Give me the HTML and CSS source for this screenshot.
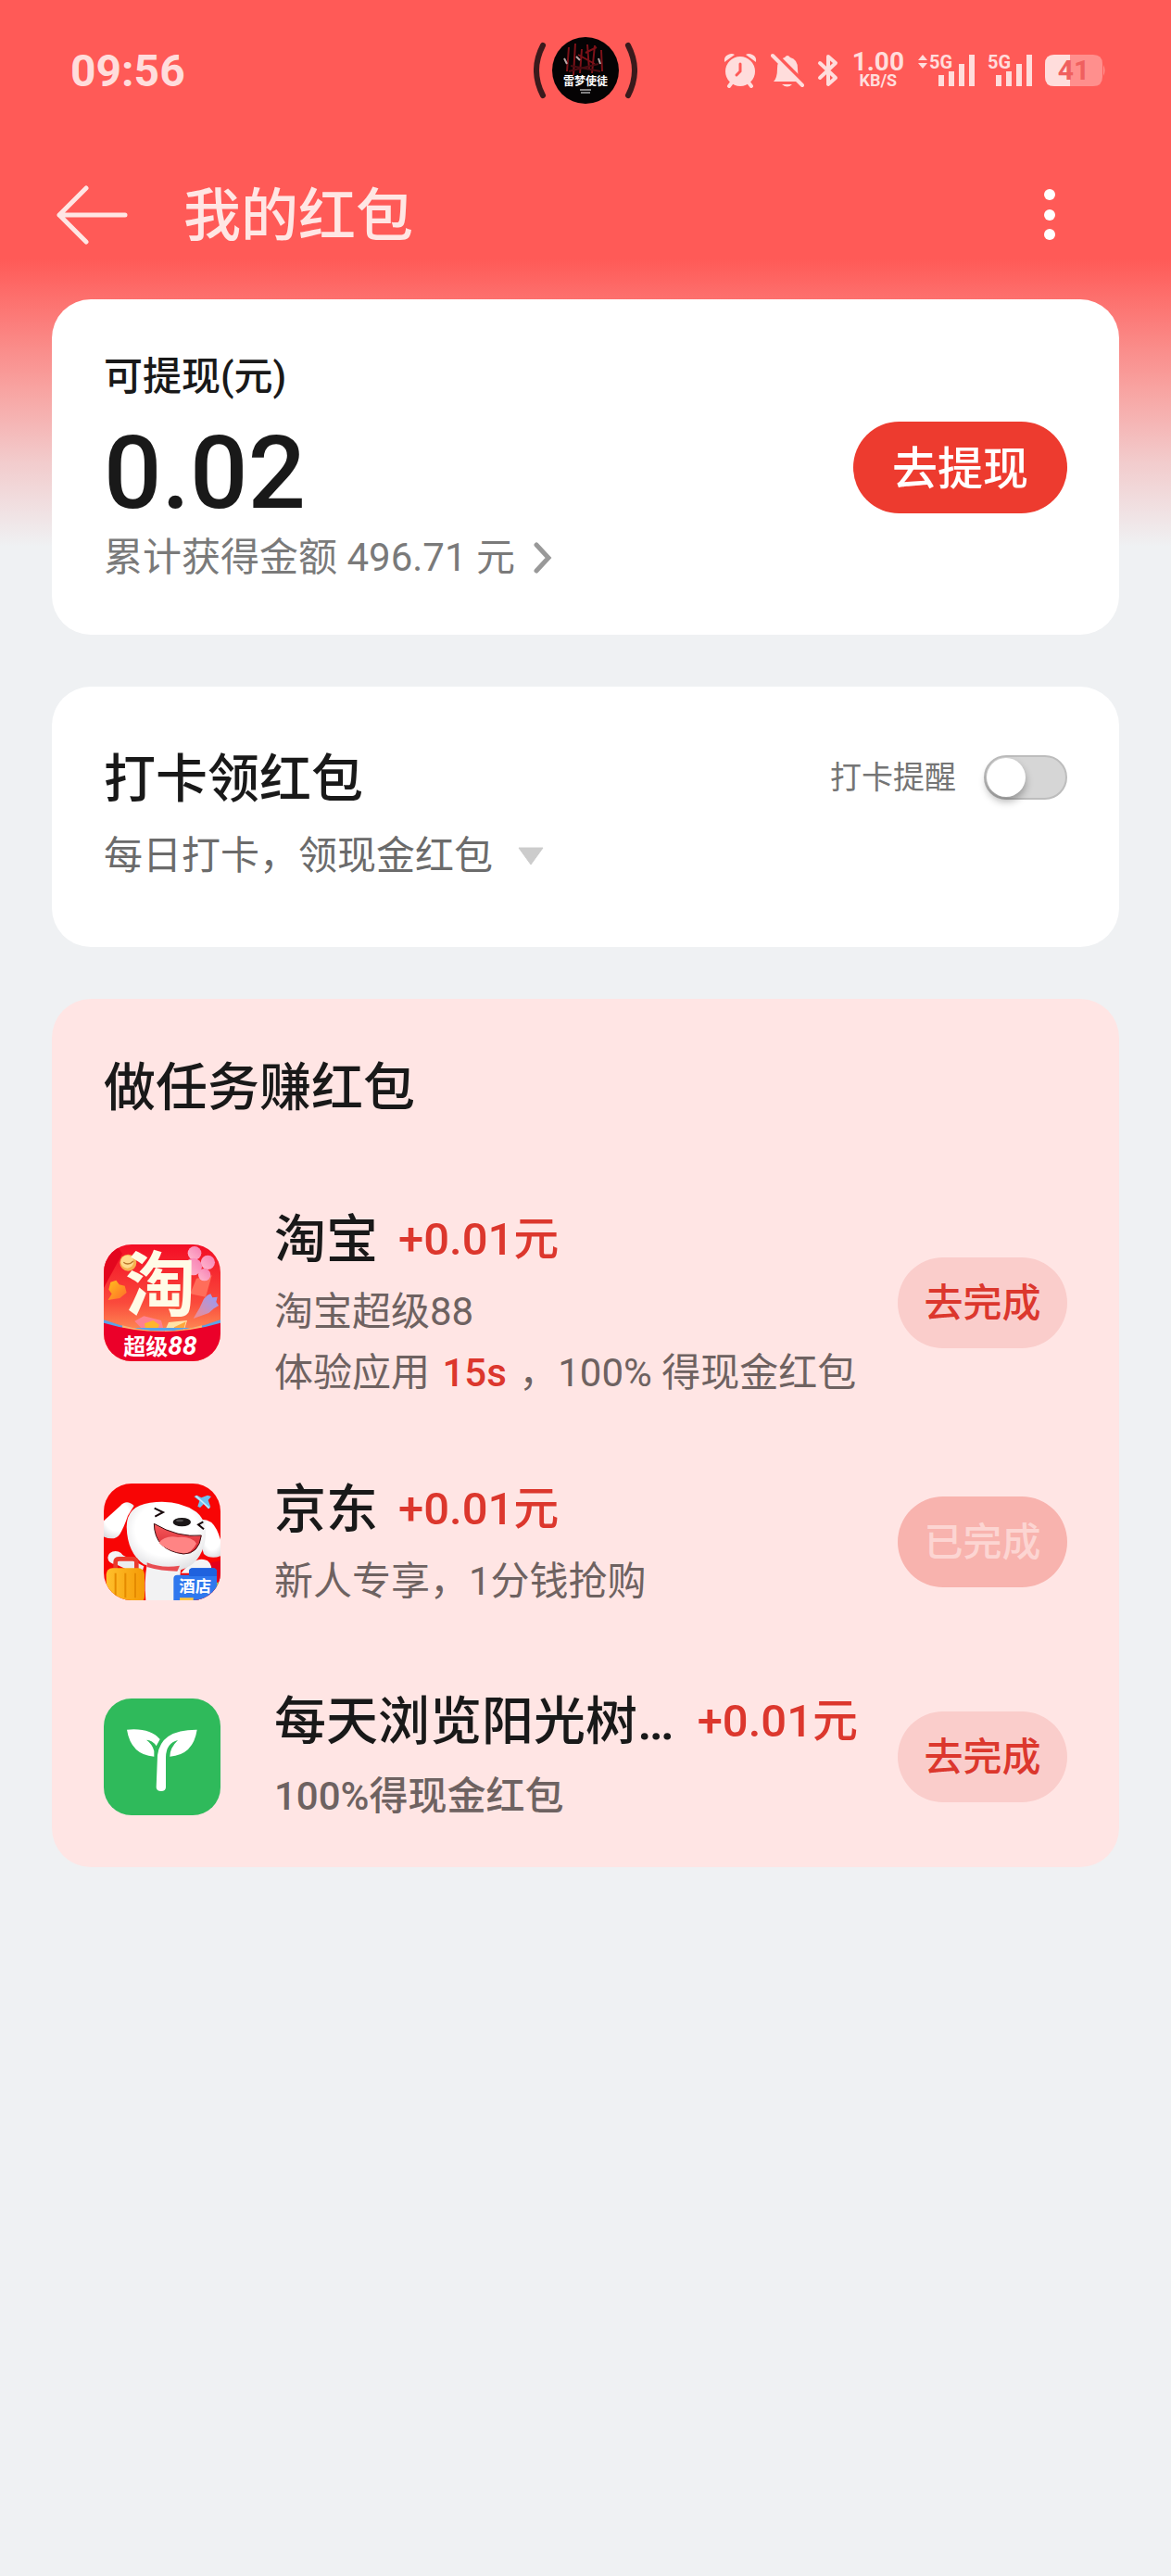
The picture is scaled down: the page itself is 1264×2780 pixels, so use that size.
FILE: index.html
```html
<!DOCTYPE html>
<html lang="zh-CN">
<head>
    <meta charset="UTF-8">
    <meta name="viewport" content="width=device-width, initial-scale=1.0">
    <title>我的红包</title>
    <link rel="stylesheet" href="styles.css">
</head>
<body>

<div class="status-bar">
    <span class="status-time">09:56</span>

    <svg class="status-island" width="112" height="74" viewBox="0 0 112 74">
        <path d="M10 10 Q-4 37 10 64 M102 10 Q116 37 102 64" fill="none" stroke="#3a1a1c" stroke-width="6" stroke-linecap="round"/>
        <circle cx="56" cy="37" r="36" fill="#050304"/>
        <path d="M38 12 L36 38 M45 8 L43 42 M52 14 L50 40 M58 9 L60 36 M66 10 L63 40 M73 15 L74 38 M48 20 L66 30 M56 18 L68 12" stroke="#7d1118" stroke-width="2" fill="none"/>
        <path d="M33 24 L36 30 M46 22 L50 26 M70 24 L72 30" stroke="#b9a7a8" stroke-width="2"/>
        <path d="M40 32 L72 38 M38 38 L70 30" stroke="#4a0c12" stroke-width="2"/>
        <text class="cover-title" x="56" y="53" text-anchor="middle">雷梦使徒</text>
        <path d="M50 58 H62 M51 61 H61" stroke="#fff" stroke-width="1"/>
    </svg>

    <div class="status-icons">
        <svg width="38" height="38" viewBox="0 0 38 38">
            <path d="M2 10 Q1 4 6 2 Q10 0 13 2 Z M36 10 Q37 4 32 2 Q28 0 25 2 Z" class="tint"/>
            <circle cx="19" cy="20" r="16" class="tint"/>
            <path d="M10 32 L7 36 M28 32 L31 36" class="tint-line"/>
            <path d="M19 12 V20 L15 24" fill="none" stroke="#ff5a57" stroke-width="3" stroke-linecap="round"/>
        </svg>
        <svg width="36" height="38" viewBox="0 0 36 38">
            <path d="M3 31 Q7 27 7 17 Q7 7 15 5 Q18 1 21 5 Q29 7 29 17 Q29 27 33 31 Z" class="tint"/>
            <path d="M12 34 H23 Q18 39 12 34 Z" class="tint"/>
            <path d="M4 0 L36 32" stroke="#ff5a57" stroke-width="4"/>
            <path d="M2 3 L34 35" class="tint-line"/>
        </svg>
        <svg width="24" height="38" viewBox="0 0 24 38">
            <path d="M3 11 L20 27 L12 34 V4 L20 11 L3 27" fill="none" class="tint-stroke"/>
        </svg>
        <div class="net-speed"><span class="speed-value">1.00</span><span class="speed-unit">KB/S</span></div>
        <svg width="62" height="50" viewBox="0 -6 62 50">
            <path d="M1 8 L6 2 L11 8 Z M1 11 L6 17 L11 11 Z" class="tint"/>
            <text class="net-type" x="13" y="17">5G</text>
            <path d="M26 24 V36 M37 20 V36 M48 12 V36 M59 2 V36" class="bars"/>
        </svg>
        <svg width="48" height="50" viewBox="0 -6 48 50">
            <text class="net-type" x="0" y="17">5G</text>
            <path d="M12 24 V36 M23 20 V36 M34 12 V36 M45 2 V36" class="bars"/>
        </svg>
        <svg width="66" height="38" viewBox="0 0 66 38">
            <path d="M10 2 H52 Q62 2 62 12 V26 Q62 36 52 36 H10 Q0 36 0 26 V12 Q0 2 10 2 Z" fill="#ff8f8d"/>
            <path d="M10 2 H27 V36 H10 Q0 36 0 26 V12 Q0 2 10 2 Z" class="tint"/>
            <path d="M63 13 Q66 19 63 25 Z" fill="#ff8f8d"/>
            <text class="battery-level" x="31" y="29" text-anchor="middle">41</text>
        </svg>
    </div>
</div>

<header class="top-bar">
    <button class="icon-button" type="button" aria-label="返回">
        <svg width="78" height="64" viewBox="0 0 78 64">
            <path d="M33 3 L4 32 L33 61 M4 32 H75" fill="none" stroke="#ffe6e4" stroke-width="5" stroke-linecap="round" stroke-linejoin="round"/>
        </svg>
    </button>
    <h1>我的红包</h1>
    <button class="icon-button" type="button" aria-label="更多">
        <svg width="40" height="60" viewBox="0 0 40 60">
            <circle cx="20" cy="8" r="6" fill="#fff"/>
            <circle cx="20" cy="30" r="6" fill="#fff"/>
            <circle cx="20" cy="51" r="6" fill="#fff"/>
        </svg>
    </button>
</header>

<main>
    <section class="card balance">
        <div class="balance-info">
            <div class="balance-label">可提现(元)</div>
            <div class="balance-amount">0.02</div>
            <a class="balance-total" href="#">累计获得金额 496.71 元
                <svg width="20" height="34" viewBox="0 0 20 34">
                    <path d="M3 3 L16 17 L3 31" fill="none" stroke="#999" stroke-width="5" stroke-linecap="round"/>
                </svg>
            </a>
        </div>
        <button class="withdraw" type="button">去提现</button>
    </section>

    <section class="card checkin">
        <div class="checkin-head">
            <h2>打卡领红包</h2>
            <label class="reminder" for="reminder">打卡提醒
                <input class="switch" type="checkbox" id="reminder">
            </label>
        </div>
        <div class="checkin-desc">每日打卡，领现金红包
            <svg width="30" height="20" viewBox="0 0 30 20">
                <path d="M2 1 H28 L15 19 Z" fill="#ccc" stroke="#ccc" stroke-width="1" stroke-linejoin="round"/>
            </svg>
        </div>
    </section>

    <section class="card tasks">
        <h2>做任务赚红包</h2>
        <ul class="task-list">
            <li class="task">
                <svg class="app-icon" viewBox="0 0 378 378">
                    <defs>
                        <linearGradient id="tbBg" x1="0" y1="0" x2="0" y2="1">
                            <stop offset="0" stop-color="#f30d25"/>
                            <stop offset="0.5" stop-color="#fa4a3c"/>
                            <stop offset="0.8" stop-color="#ff9a5a"/>
                        </linearGradient>
                        <linearGradient id="tbFlower" x1="1" y1="0" x2="0" y2="1">
                            <stop offset="0" stop-color="#f77fb2"/>
                            <stop offset="1" stop-color="#ffb9cf"/>
                        </linearGradient>
                        <linearGradient id="tbPurple" x1="1" y1="0" x2="0" y2="1">
                            <stop offset="0" stop-color="#8f9dff"/>
                            <stop offset="1" stop-color="#f58a8c"/>
                        </linearGradient>
                        <linearGradient id="tbGold" x1="0" y1="0" x2="1" y2="1">
                            <stop offset="0" stop-color="#ffbe1c"/>
                            <stop offset="1" stop-color="#ff6a2b"/>
                        </linearGradient>
                    </defs>
                    <rect width="378" height="378" fill="url(#tbBg)"/>
                    <path d="M60 30 L0 140 V0 H40 Z" fill="#e3061e"/>
                    <path d="M300 110 L350 100 L330 170 L280 160 Z" fill="#ff6d5a"/>
                    <g fill="url(#tbFlower)">
                        <circle cx="294" cy="28" r="22"/>
                        <circle cx="337" cy="58" r="23"/>
                        <circle cx="326" cy="98" r="20"/>
                        <circle cx="290" cy="72" r="28"/>
                    </g>
                    <circle cx="79" cy="59" r="27" fill="#f5b14e"/>
                    <circle cx="76" cy="56" r="21" fill="#ffd98a"/>
                    <path d="M64 58 Q80 70 96 54" stroke="#b9762c" stroke-width="4" fill="none"/>
                    <path d="M22 122 L40 116 L50 130 L68 134 L74 156 L52 174 L14 180 L26 160 L16 146 Z" fill="url(#tbGold)"/>
                    <path d="M324 176 L336 164 L346 160 L352 172 L368 170 L364 186 L372 198 L356 208 L340 222 L290 240 L310 206 Z" fill="url(#tbPurple)"/>
                    <path d="M100 248 L130 232 L186 246 L196 284 L132 282 Z" fill="#ff8290"/>
                    <path d="M132 256 L160 246 L180 260 L170 282 L136 280 Z" fill="#ffb52e"/>
                    <path d="M210 252 L270 246 L258 284 L196 284 Z" fill="#ffe3a8"/>
                    <path d="M228 268 L266 250 L256 284 L222 284 Z" fill="#ffa63c"/>
                    <path d="M0 244 Q190 316 378 244 V270 H0 Z" fill="#5aa2e8"/>
                    <path d="M60 262 Q190 300 318 262 V290 H60 Z" fill="#ffb36b"/>
                    <path d="M0 254 Q190 310 378 254 V378 H0 Z" fill="#eb0029"/>
                    <text class="tao-char" x="184" y="213" text-anchor="middle">淘</text>
                    <text class="tao-tag" x="64" y="356">超级<tspan class="tao-num">88</tspan></text>
                </svg>
                <div class="task-info">
                    <div class="task-title"><h3>淘宝</h3><span class="reward">+0.01元</span></div>
                    <p>淘宝超级88</p>
                    <p>体验应用 <span class="accent">15s</span> ，100% 得现金红包</p>
                </div>
                <button class="task-button" type="button">去完成</button>
            </li>

            <li class="task">
                <svg class="app-icon" viewBox="0 0 378 378">
                    <defs>
                        <radialGradient id="jdFur" cx="0.5" cy="0.4" r="0.65">
                            <stop offset="0.6" stop-color="#ffffff"/>
                            <stop offset="1" stop-color="#dcdcdf"/>
                        </radialGradient>
                        <linearGradient id="jdCase" x1="0" y1="0" x2="1" y2="0">
                            <stop offset="0" stop-color="#ffc02c"/>
                            <stop offset="1" stop-color="#f59a05"/>
                        </linearGradient>
                        <linearGradient id="jdMouth" x1="0" y1="0" x2="0" y2="1">
                            <stop offset="0" stop-color="#f75a5c"/>
                            <stop offset="1" stop-color="#d42530"/>
                        </linearGradient>
                    </defs>
                    <rect width="378" height="378" fill="#f80505"/>
                    <path d="M230 378 L330 260 L378 250 V378 Z" fill="#e3001b"/>
                    <!-- body and paws -->
                    <path d="M140 262 Q130 320 136 378 H240 L250 270 Z" fill="#f2f2f3"/>
                    <ellipse cx="38" cy="240" rx="25" ry="21" fill="#f4f4f5"/>
                    <path d="M50 226 L130 268 L120 300 L40 262 Z" fill="#ececee"/>
                    <path d="M250 290 Q300 230 336 250 Q358 268 340 290 Z" fill="#f4f4f5"/>
                    <!-- ears -->
                    <path d="M98 72 Q74 50 54 72 Q10 112 -10 130 V168 Q34 190 52 164 Q66 140 78 104 Z" fill="url(#jdFur)"/>
                    <path d="M318 116 Q350 116 366 150 Q384 190 388 230 Q350 250 324 228 Q310 190 318 116 Z" fill="url(#jdFur)"/>
                    <!-- head -->
                    <path d="M74 140 Q74 72 150 62 Q240 50 300 92 Q338 124 328 186 Q314 260 250 280 Q190 284 130 262 Q76 224 74 140 Z" fill="url(#jdFur)"/>
                    <path d="M140 256 Q190 276 246 266 L238 284 Q186 284 140 270 Z" fill="#e84d52"/>
                    <path d="M164 80 L192 93 L166 107 M322 124 L306 133 L324 148" fill="none" stroke="#17090b" stroke-width="6"/>
                    <ellipse cx="253" cy="125" rx="29" ry="14" fill="#1b1718"/>
                    <ellipse cx="246" cy="120" rx="12" ry="4" fill="#4d4a4b"/>
                    <path d="M163 130 Q240 176 316 168 Q308 228 258 228 Q164 216 163 130 Z" fill="url(#jdMouth)" stroke="#3c0d10" stroke-width="3"/>
                    <path d="M178 192 Q200 166 240 174 Q284 170 300 194 Q284 227 258 226 Q206 220 178 192 Z" fill="#ff8484"/>
                    <!-- plane -->
                    <path d="M292 42 L302 38 L316 46 L336 38 L348 42 L338 54 L346 76 L338 82 L324 66 L312 78 L304 74 L310 56 Z" fill="#6fc0ee"/>
                    <path d="M298 40 L342 80" stroke="#c6e9fb" stroke-width="5"/>
                    <!-- suitcase -->
                    <path d="M38 278 V254 Q38 244 50 244 H94 Q106 244 106 254 V278" fill="none" stroke="#ea3a2c" stroke-width="14"/>
                    <rect x="8" y="274" width="124" height="112" rx="20" fill="url(#jdCase)"/>
                    <path d="M38 290 V370 M70 290 V370 M102 290 V370" stroke="#e58a00" stroke-width="6"/>
                    <!-- hotel sign -->
                    <path d="M366 320 H378 V378 H350 Z" fill="#8fcf5a"/>
                    <path d="M226 308 Q226 296 238 296 H276 V286 Q276 274 288 274 H354 Q366 274 366 286 V378 H226 Z" fill="#2f78ee"/>
                    <path d="M276 286 Q276 274 288 274 H354 Q366 274 366 286 V300 H276 Z" fill="#1f62de"/>
                    <path d="M246 370 H290 V378 H246 Z" fill="#ffc640"/>
                    <text class="jd-tag" x="296" y="352" text-anchor="middle">酒店</text>
                </svg>
                <div class="task-info">
                    <div class="task-title"><h3>京东</h3><span class="reward">+0.01元</span></div>
                    <p>新人专享，1分钱抢购</p>
                </div>
                <button class="task-button" type="button" disabled>已完成</button>
            </li>

            <li class="task">
                <svg class="app-icon" viewBox="0 0 378 378">
                    <rect width="378" height="378" fill="#2fba5b"/>
                    <path d="M75 101 Q150 94 182 132 L170 154 Q158 134 138 134 Q158 148 163 170 V188 Q88 182 75 101 Z" fill="#fff"/>
                    <path d="M302 101 Q290 182 214 188 Q214 160 240 135 Q202 144 201 190 V288 Q200 300 186 300 Q171 300 170 288 L174 184 Q184 100 302 101 Z" fill="#fff"/>
                </svg>
                <div class="task-info">
                    <div class="task-title"><h3 class="long">每天浏览阳光树…</h3><span class="reward">+0.01元</span></div>
                    <p class="strong">100%得现金红包</p>
                </div>
                <button class="task-button" type="button">去完成</button>
            </li>
        </ul>
    </section>
</main>

</body>
</html>
```
FILE: styles.css
```css
* {
    box-sizing: border-box;
}
body {
    margin: 0;
    min-height: 100vh;
    font-family: Roboto, "Noto Sans CJK SC", sans-serif;
    font-size: 42px;
    color: #191919;
    background: #eff1f3 linear-gradient(#ff5a57 280px, #f8a3a1 420px, #f2cccd 500px, #eff1f3 590px) no-repeat;
}
h1, h2, h3, p, ul {
    margin: 0;
    padding: 0;
    font-weight: 500;
}
svg {
    display: block;
    flex: none;
}
button {
    font-family: inherit;
    font-weight: 500;
    border: none;
    cursor: pointer;
}

/* status bar */
.status-bar {
    display: grid;
    grid-template-columns: 1fr auto 1fr;
    align-items: center;
    height: 152px;
    padding: 0 70px;
}
.status-time {
    padding-left: 6px;
    font-size: 48px;
    font-weight: 700;
    color: #ffdddc;
}
.status-icons {
    display: flex;
    justify-content: flex-end;
    align-items: center;
    gap: 14px;
}
.tint {
    fill: #ffdddc;
}
.tint-line {
    stroke: #ffdddc;
    stroke-width: 4;
    stroke-linecap: round;
}
.tint-stroke {
    stroke: #ffdddc;
    stroke-width: 4;
    stroke-linejoin: round;
    stroke-linecap: round;
}
.bars {
    stroke: #ffdddc;
    stroke-width: 6;
    stroke-linecap: butt;
}
.net-speed {
    display: flex;
    flex-direction: column;
    align-items: center;
    color: #ffdddc;
    font-weight: 700;
}
.speed-value {
    font-size: 28px;
    line-height: 22px;
}
.speed-unit {
    font-size: 18px;
    line-height: 18px;
}
.net-type {
    font-size: 20px;
    font-weight: 700;
    fill: #ffdddc;
}
.battery-level {
    font-size: 30px;
    font-weight: 700;
    fill: #f0605f;
}
.cover-title {
    font-size: 12px;
    font-weight: 700;
    fill: #fff;
}

/* title bar */
.top-bar {
    display: flex;
    align-items: center;
    height: 160px;
    padding: 0 111px 0 60px;
}
.top-bar h1 {
    flex: 1;
    margin-left: 60px;
    padding-top: 4px;
    font-size: 62px;
    line-height: 84px;
    color: #ffe6e4;
}
.icon-button {
    padding: 0;
    background: none;
}

/* cards */
main {
    display: flex;
    flex-direction: column;
    gap: 56px;
    padding: 11px 56px 56px;
}
.card {
    padding: 54px 56px;
    border-radius: 42px;
    background: #fff;
}
.card h2 {
    padding-top: 4px;
    font-size: 56px;
    line-height: 84px;
}

.balance {
    display: flex;
    justify-content: space-between;
    align-items: center;
}
.balance-info {
    padding-top: 4px;
}
.balance-label {
    font-weight: 500;
    line-height: 52px;
}
.balance-amount {
    margin-top: 17px;
    font-size: 110px;
    font-weight: 500;
    line-height: 122px;
}
.balance-total {
    display: flex;
    align-items: center;
    gap: 20px;
    line-height: 59px;
    color: #7a7a7a;
    text-decoration: none;
}
.withdraw {
    width: 231px;
    height: 99px;
    padding: 0 0 6px;
    border-radius: 50px;
    font-size: 49px;
    color: #fff;
    background: #ed3b2f;
}

.checkin {
    padding-bottom: 65px;
}
.checkin-head {
    display: flex;
    justify-content: space-between;
    align-items: center;
}
.reminder {
    display: flex;
    align-items: center;
    gap: 30px;
    font-size: 34px;
    line-height: 48px;
    color: #757575;
}
.switch {
    appearance: none;
    display: flex;
    align-items: center;
    width: 90px;
    height: 48px;
    margin: 0;
    padding: 0 1px;
    border: 2px solid #bdbdbd;
    border-radius: 24px;
    background: #d6d6d6;
}
.switch::before {
    content: "";
    width: 42px;
    height: 42px;
    border-radius: 50%;
    background: #fff;
    box-shadow: 0 5px 8px rgba(0, 0, 0, 0.3);
}
.switch:checked {
    justify-content: flex-end;
    background: #ed3b2f;
}
.checkin-desc {
    display: flex;
    align-items: center;
    gap: 26px;
    margin-top: 8px;
    line-height: 66px;
    color: #6b6b6b;
}

/* task list */
.tasks {
    padding-bottom: 40px;
    background: #ffe5e4;
}
.tasks h2 {
    line-height: 76px;
}
.task-list {
    display: flex;
    flex-direction: column;
    gap: 72px;
    margin-top: 84px;
    list-style: none;
}
.task {
    display: flex;
    align-items: center;
}
.task:last-child {
    margin-top: 4px;
}
.app-icon {
    width: 126px;
    height: 126px;
    border-radius: 30px;
}
.task-info {
    flex: 1;
    min-width: 0;
    margin: 0 43px 0 58px;
    padding-top: 4px;
}
.task-title {
    display: flex;
    align-items: center;
    gap: 22px;
    margin-bottom: 7px;
    line-height: 76px;
}
.task-title h3 {
    font-size: 56px;
    white-space: nowrap;
}
.task-title .long {
    flex: 1;
}
.reward {
    font-size: 49px;
    font-weight: 500;
    white-space: nowrap;
    color: #dc372d;
}
.task-info p {
    font-weight: 400;
    line-height: 66px;
    color: #6e6261;
}
.task-info .strong {
    font-weight: 500;
    line-height: 72px;
}
.accent {
    margin: 0 3px;
    font-weight: 500;
    color: #dc372d;
}
.task-button {
    width: 183px;
    height: 98px;
    padding: 0 0 6px;
    border-radius: 49px;
    font-size: 42px;
    color: #dc372d;
    background: #facdcb;
}
.task-button:disabled {
    color: #fcd5d2;
    background: #f8b3ae;
    cursor: default;
}

/* lettering inside the app icons */
.tao-char {
    font-size: 228px;
    font-weight: 700;
    fill: #fffbe6;
}
.tao-tag {
    font-size: 72px;
    font-weight: 700;
    fill: #fff;
}
.tao-num {
    font-size: 84px;
    font-style: italic;
}
.jd-tag {
    font-size: 52px;
    font-weight: 700;
    fill: #fff;
}
```
